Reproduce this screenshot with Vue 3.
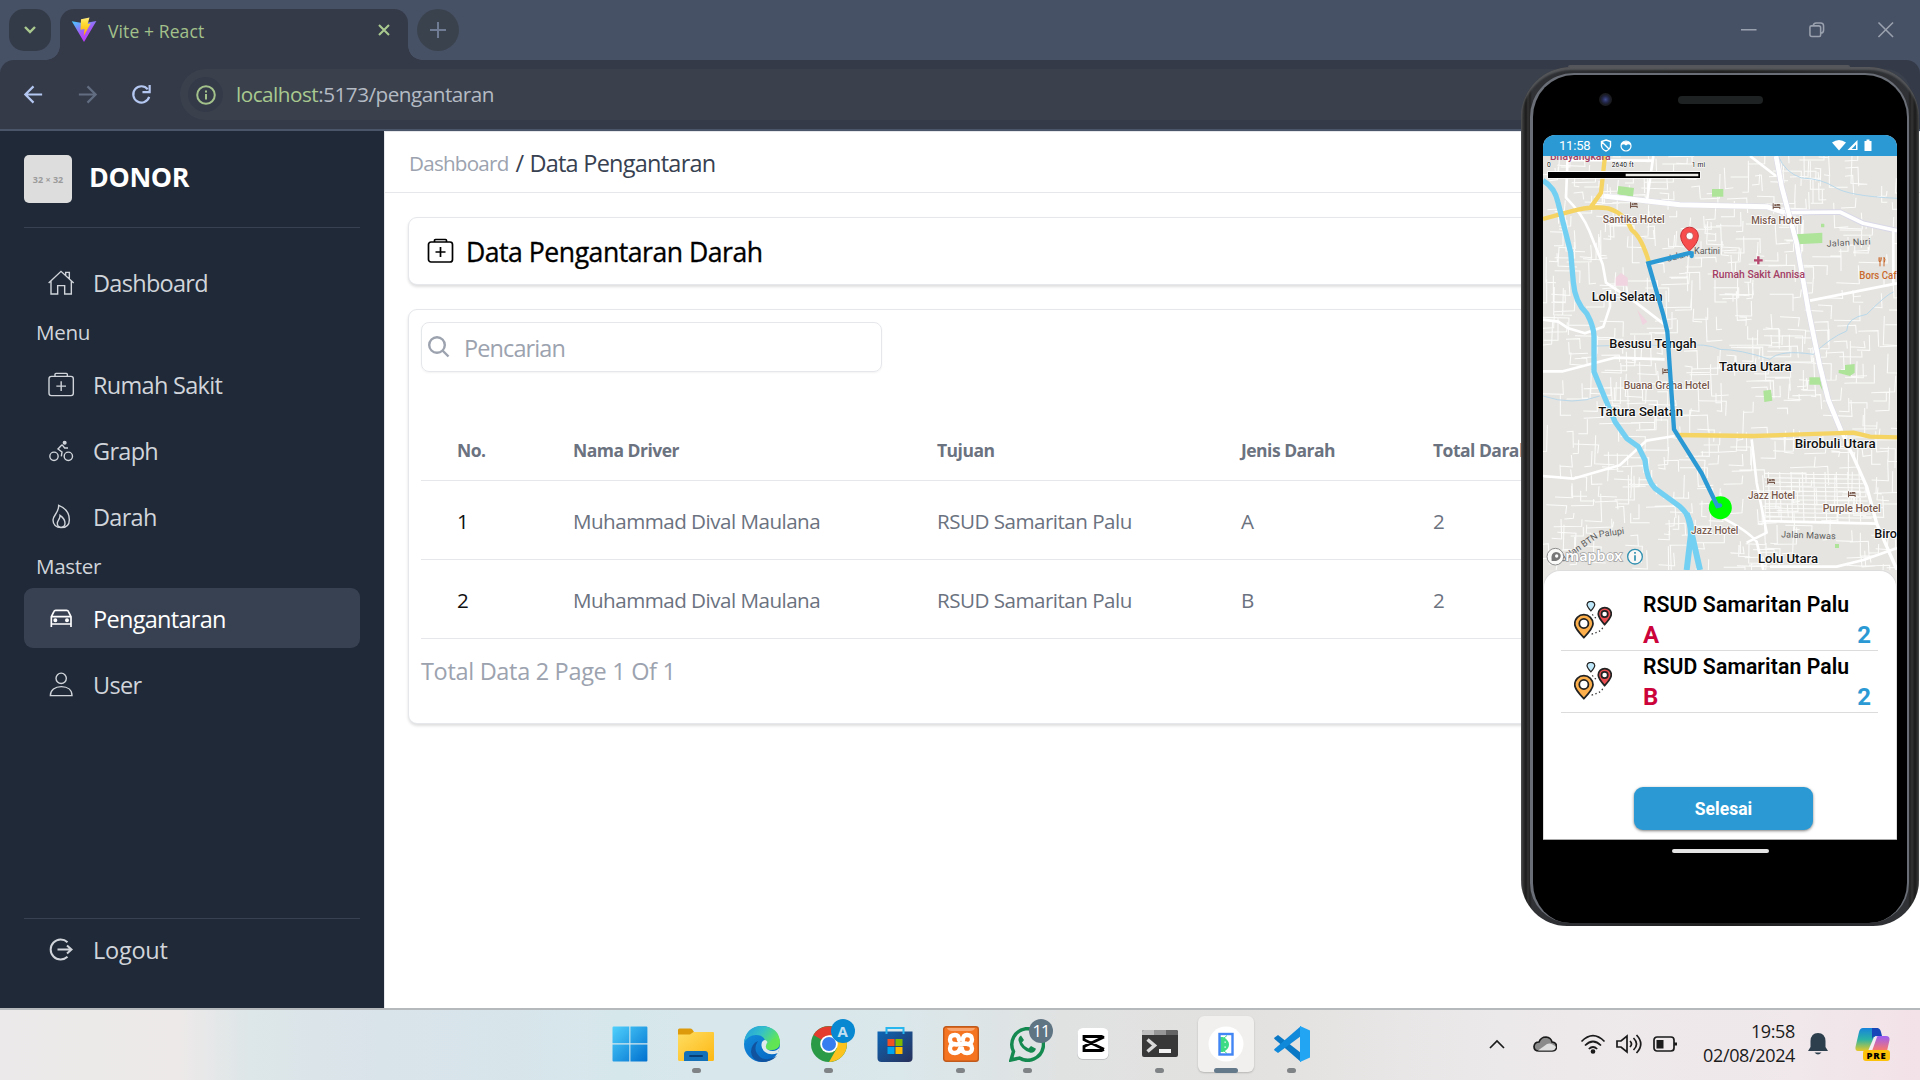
<script setup>
const menu = [
  { label: 'Dashboard', icon: 'house' },
  { heading: 'Menu' },
  { label: 'Rumah Sakit', icon: 'medical' },
  { label: 'Graph', icon: 'bike' },
  { label: 'Darah', icon: 'flame' },
  { heading: 'Master' },
  { label: 'Pengantaran', icon: 'car', active: true },
  { label: 'User', icon: 'user' },
]
const columns = ['No.', 'Nama Driver', 'Tujuan', 'Jenis Darah', 'Total Darah']
const rows = [
  ['1', 'Muhammad Dival Maulana', 'RSUD Samaritan Palu', 'A', '2'],
  ['2', 'Muhammad Dival Maulana', 'RSUD Samaritan Palu', 'B', '2'],
]
const deliveries = [
  { place: 'RSUD Samaritan Palu', blood: 'A', total: 2 },
  { place: 'RSUD Samaritan Palu', blood: 'B', total: 2 },
]

// Minor street grid: deterministic short blocks, slightly skewed.
let seed = 41
const rnd = () => (seed = (seed * 16807) % 2147483647) / 2147483647
let streets = ''
for (let i = 0; i < 560; i++) {
  const x = 60 + rnd() * 1070
  const y = 285 + rnd() * 1240
  const a = 18 + rnd() * 70
  const b = 14 + rnd() * 46
  const k = (rnd() - 0.5) * 7
  const s = rnd() > 0.5 ? 1 : -1
  streets += rnd() > 0.45
    ? `M${x.toFixed(0)} ${y.toFixed(0)}l${a.toFixed(0)} ${k.toFixed(0)}l${(-k).toFixed(0)} ${(s * b).toFixed(0)}`
    : `M${x.toFixed(0)} ${y.toFixed(0)}l${k.toFixed(0)} ${a.toFixed(0)}l${(s * b).toFixed(0)} ${(-k).toFixed(0)}`
}
for (let i = 0; i < 12; i++) streets += `M735 ${1240 + i * 13}L${1025 + i * 3} ${1245 + i * 13}`
for (let i = 0; i < 9; i++) streets += `M${745 + i * 34} 1236L${750 + i * 34} 1385`

const areas = [
  ['Lolu Selatan', 215, 723, 213], ['Besusu Tengah', 268, 864, 262], ['Tatura Utara', 597, 932, 218],
  ['Tatura Selatan', 235, 1069, 254], ['Birobuli Utara', 824, 1163, 243], ['Lolu Utara', 714, 1508, 180], ['Biro', 1063, 1434, 68],
]
const hotels = [
  ['Santika Hotel', 248, 490, 186, 330, 427], ['Misfa Hotel', 694, 493, 152, 758, 430],
  ['Buana Graha Hotel', 311, 987, 258, 427, 925], ['Jazz Hotel', 684, 1317, 141, 742, 1255],
  ['Purple Hotel', 908, 1356, 174, 984, 1294], ['Jazz Hotel', 513, 1423, 142, 0, 0],
]
</script>

<template>
  <div class="desktop">
    <header class="tabs">
      <button class="tab-list"><svg width="14" height="10" viewBox="0 0 14 10"><path d="M2 2l5 5 5-5" /></svg></button>
      <div class="tab">
        <svg class="vite" width="26" height="26" viewBox="0 0 26 26">
          <defs>
            <linearGradient id="va" x1="0" y1="0" x2=".6" y2="1"><stop offset="0" stop-color="#41d1ff" /><stop offset=".6" stop-color="#a855f7" /><stop offset="1" stop-color="#bd34fe" /></linearGradient>
            <linearGradient id="vb" x1="0" y1="0" x2="0" y2="1"><stop offset="0" stop-color="#ffea83" /><stop offset=".3" stop-color="#ffdd35" /><stop offset="1" stop-color="#ffa800" /></linearGradient>
          </defs>
          <path d="M.8 4.2L13 25 25.4 4 13 6.2z" fill="url(#va)" /><path d="M10 2.2l8.5-1.6-1.8 6.5 3-.5-7 12.5.8-7.2-4 .8z" fill="url(#vb)" />
        </svg>
        <span class="tab-title">Vite + React</span>
        <svg class="tab-x" width="12" height="12" viewBox="0 0 12 12"><path d="M1 1l10 10M11 1L1 11" /></svg>
      </div>
      <button class="new-tab"><svg width="16" height="16" viewBox="0 0 16 16"><path d="M8 0v16M0 8h16" /></svg></button>
      <div class="win-controls">
        <svg viewBox="0 0 18 18"><path d="M1 9h16" /></svg>
        <svg viewBox="0 0 18 18"><path d="M2 6.5Q2 5 3.500 5H11q2 0 2 2v7.500q0 1.500-1.500 1.500H4q-2 0-2-2zM5.500 5q0-3 3-3H13q3 0 3 3v4.500q0 3-3 3" /></svg>
        <svg viewBox="0 0 18 18"><path d="M1.500 1.500l15 15M16.500 1.500l-15 15" /></svg>
      </div>
    </header>

    <div class="toolbar">
      <div class="nav">
        <svg viewBox="0 0 24 24"><path d="M21 12H4M12 3.500L3.500 12l8.500 8.500" /></svg>
        <svg class="dim" viewBox="0 0 24 24"><path d="M3 12h17M12 3.500l8.500 8.500-8.500 8.500" /></svg>
        <svg viewBox="0 0 24 24"><path d="M20 14.500A8.500 8.500 0 1 1 18.500 6.500" /><path d="M20.500 2v7.500H13" /></svg>
      </div>
      <div class="url">
        <span class="info"><svg width="20" height="20" viewBox="0 0 20 20"><circle cx="10" cy="10" r="8.800" /><path d="M10 9v5.500M10 5.400v2" /></svg></span>
        <span class="address"><b>localhost</b>:5173/pengantaran</span>
      </div>
    </div>

    <div class="page">
      <aside class="sidebar">
        <div class="brand"><span class="logo">32 × 32</span><strong>DONOR</strong></div>
        <nav class="menu">
          <template v-for="m in menu" :key="m.heading || m.label">
            <h3 v-if="m.heading">{{ m.heading }}</h3>
            <a v-else :class="{ active: m.active }">
              <svg v-if="m.icon === 'house'" viewBox="142 84 84 84"><path d="M147 129L184 94l38 35M154 124v38h20v-25h21v25h20v-38M198 106v-9h11v20" /></svg>
              <svg v-else-if="m.icon === 'medical'" viewBox="142 390 84 84"><rect x="148" y="409" width="73" height="58" rx="7" /><path d="M166 408v-5q0-3 3-3h31q3 0 3 3v5M184.500 424v29M170 438.500h29" /></svg>
              <svg v-else-if="m.icon === 'bike'" viewBox="142 588 84 84"><circle cx="163" cy="649" r="12.500" /><circle cx="206" cy="649" r="12.500" /><circle cx="195" cy="608" r="4" fill="currentColor" /><path d="M187 614l-12 13 12 9-2 13M187 614l8 10h10" /></svg>
              <svg v-else-if="m.icon === 'flame'" viewBox="142 786 84 84"><path d="M177 796c23 9 32 25 32 43 0 16-10 24-25 24s-24-10-24-23c0-14 18-22 17-44z" /><path d="M181 826c9 6 15 15 15 24 0 8-5 12-12 12s-11-4-11-12c0-9 9-13 8-24z" /></svg>
              <svg v-else-if="m.icon === 'car'" viewBox="142 1092 84 84" class="bold"><path d="M155 1161v-31l8-16q1-3 5-3h33q4 0 5 3l8 16v31M155 1130h59M155 1152h59" /><circle cx="167" cy="1141" r="3.500" fill="currentColor" /><circle cx="202" cy="1141" r="3.500" fill="currentColor" /></svg>
              <svg v-else viewBox="142 1290 84 84"><circle cx="184.500" cy="1315" r="15.500" /><path d="M152 1367c0-17 14-27 33-27s32 10 32 27z" /></svg>
              {{ m.label }}
            </a>
          </template>
        </nav>
        <div class="logout menu">
          <a><svg viewBox="0 0 28 28" class="out"><path d="M20.500 7.200A10 10 0 1 0 20.500 21.800M10.500 14.500h14M20 10.500l4.500 4-4.500 4" /></svg>Logout</a>
        </div>
      </aside>

      <main class="main">
        <div class="crumbs"><span>Dashboard</span><i>/</i><b>Data Pengantaran</b></div>
        <div class="content">
          <section class="card heading">
            <svg width="28" height="28" viewBox="0 0 28 28"><rect x="1.500" y="5" width="24" height="20" rx="2.500" /><path d="M7.500 5V3.500q0-1 1-1h10q1 0 1 1V5M13.500 10v10M8.500 15h10" /></svg>
            <h1>Data Pengantaran Darah</h1>
          </section>
          <section class="card list">
            <label class="search">
              <svg width="22" height="22" viewBox="0 0 22 22"><circle cx="9" cy="9" r="7.800" /><path d="M14.500 14.500L20.500 20.500" /></svg>
              <span>Pencarian</span>
            </label>
            <div class="table">
              <div class="tr th"><span v-for="c in columns" :key="c">{{ c }}</span></div>
              <div v-for="r in rows" :key="r[0]" class="tr"><span v-for="(c, i) in r" :key="i">{{ c }}</span></div>
            </div>
            <p class="total">Total Data 2 Page 1 Of 1</p>
          </section>
        </div>
      </main>
    </div>

    <footer class="taskbar">
      <div class="apps">
        <span class="app"><svg viewBox="0 0 36 36"><defs><linearGradient id="w" x1="0" y1="0" x2="1" y2="1"><stop offset="0" stop-color="#4fd0fc" /><stop offset="1" stop-color="#0070cf" /></linearGradient></defs><path d="M.5 1.500q0-1 1-1h15.800v16.800H.5zM18.400.5h16q1 0 1 1v15.800h-17zM.5 18.400h16.800v17H1.500q-1 0-1-1zM18.400 18.400h17v16q0 1-1 1h-16z" fill="url(#w)" /></svg></span>
        <span class="app run"><svg viewBox="0 0 36 36"><defs><linearGradient id="fo" x1="0" y1="0" x2="1" y2="1"><stop offset="0" stop-color="#ffdd62" /><stop offset="1" stop-color="#fdb813" /></linearGradient></defs><path d="M0 4q0-1.500 1.500-1.500H12q1.500 0 2.500 1.300L16 6v5H0z" fill="#dd9a0b" /><path d="M0 8.500h12L15.500 6H35q1 0 1 1v26.500q0 1.500-1.500 1.500h-33Q0 35 0 33.500z" fill="url(#fo)" /><path d="M6 35v-7q0-3 3-3h18q3 0 3 3v7z" fill="#1271b9" /><rect x="11" y="29" width="14" height="2" rx="1" fill="#073f75" /></svg></span>
        <span class="app"><svg viewBox="0 0 36 36"><defs><linearGradient id="e1" x1="0" y1="0" x2="1" y2=".5"><stop offset="0" stop-color="#2199e4" /><stop offset=".5" stop-color="#35c1c7" /><stop offset="1" stop-color="#66eb4c" /></linearGradient><linearGradient id="e2" x1="0" y1="0" x2=".7" y2="1"><stop offset="0" stop-color="#1593df" /><stop offset="1" stop-color="#0768c4" /></linearGradient></defs><circle cx="18" cy="18" r="18" fill="url(#e2)" /><path d="M0 17Q2 0 18 0q17 1 18 16 0 8-9 8-6 0-5-4Q22 9 12 9 4 9 0 17z" fill="url(#e1)" /><path d="M14 15q-6 9 2 16 7 5 17-1-6 6-15 6-10-1-11-10 0-8 7-11z" fill="#11539f" /><path d="M18 16q3-4 5.500 0-2 3-1.500 5 1 4 7 4 4 0 7-4l-2 6q-8 3-13-1-5-4-3-10z" fill="#dfe9ec" /><path d="M22 20q-1 4 5 4 8 0 9-8l-6-4z" fill="#60e455" opacity=".8" /></svg></span>
        <span class="app run"><svg viewBox="0 0 36 36"><circle cx="18" cy="18" r="18" fill="#2b9a47" /><path d="M18 18L2.500 9A18 18 0 0 1 33.500 9z" fill="#e33b2e" /><path d="M18 9h15.500A18 18 0 0 1 18 36l8-14z" fill="#fcc31e" /><circle cx="18" cy="18" r="8.800" fill="#fff" /><circle cx="18" cy="18" r="7" fill="#367df0" /></svg><em class="badge blue">A</em></span>
        <span class="app"><svg viewBox="0 0 36 36"><defs><linearGradient id="st" x1="0" y1="0" x2="1" y2="1"><stop offset="0" stop-color="#0d66b5" /><stop offset="1" stop-color="#28305a" /></linearGradient></defs><path d="M.5 5.500h35V32q0 4-4 4h-27q-4 0-4-4z" fill="url(#st)" /><path d="M9.500 8V2h17v6" fill="none" stroke="#27b6ed" stroke-width="2" /><path d="M10.500 13h7v7h-7z" fill="#f25022" /><path d="M18.500 13h7v7h-7z" fill="#7fba00" /><path d="M10.500 21h7v7h-7z" fill="#00a4ef" /><path d="M18.500 21h7v7h-7z" fill="#ffb900" /></svg></span>
        <span class="app run"><svg viewBox="0 0 36 36"><rect x=".7" y=".7" width="34.600" height="34.600" rx="2.500" fill="#f57421" stroke="#c05a1c" stroke-width="1.400" /><path d="M4 2h28q-1 3-5 3H9Q5 5 4 2z" fill="#f9a56f" /><g fill="none" stroke="#fff" stroke-width="4.300" stroke-linecap="round" stroke-linejoin="round"><path d="M16 14q0-5-4-5-5 0-5 4.500t5 4.500q-5 0-5 4.500T12 27q4 0 5-4.500M20 14q0-5 4-5 5 0 5 4.500T24 18q5 0 5 4.500T24 27t-5-4.500M13 18.500l10-1" /></g></svg></span>
        <span class="app run"><svg viewBox="0 0 36 36"><path d="M2 34l2.500-8.500A15.800 15.800 0 1 1 10.500 32z" fill="none" stroke="#158a50" stroke-width="3.500" /><path d="M12 9.500q-3 2-2.500 5 2 9 12 12.300 4 .5 5.500-4l-5-2.800-2.500 2.500q-4.500-2-6.500-6L15 14z" fill="#158a50" /></svg><em class="badge grey">11</em></span>
        <span class="app"><svg viewBox="0 0 36 36"><rect x="2" y="3" width="32" height="31" rx="6" fill="#bfc1c2" /><rect x="2.500" y="2" width="31" height="31" rx="5.500" fill="#fff" /><path d="M29 11.500l-2.500-1H9v3.200l20 9.500M9 23.500v-3L29 11M9 21.500v3h17.500l2.500-1" fill="none" stroke="#000" stroke-width="2.800" /></svg></span>
        <span class="app run"><svg viewBox="0 0 36 36"><rect y="4" width="36" height="27" rx="2" fill="#383838" /><path d="M0 9V6q0-2 2-2h10v5z" fill="#bebebe" /><path d="M12 4h12v5H12z" fill="#969696" /><path d="M24 4h10q2 0 2 2v3H24z" fill="#646464" /><path d="M5.500 13.500l7 6-7 6" fill="none" stroke="#dadada" stroke-width="3.500" /><rect x="17" y="23" width="12" height="4" fill="#f1f1f1" /></svg></span>
        <span class="app run focus"><svg viewBox="0 0 36 36"><circle cx="18" cy="18" r="17.500" fill="#fff" /><path d="M12 11h3q6 3 6 7.500T15 26h-3z" fill="#3ddc84" /><path d="M16 12l3-2.500M16 25l3 2.500" stroke="#3ddc84" /><path d="M16.500 15.500h1.300v1.300h-1.300zM16.500 20.500h1.300v1.300h-1.300z" fill="#fff" /><rect x="11.500" y="8" width="13" height="20.500" fill="none" stroke="#4285f4" stroke-width="2.400" /></svg></span>
        <span class="app run"><svg viewBox="0 0 36 36"><path d="M0 12l4-3 23 18v9L.5 13z" fill="#0a78c4" /><path d="M0 24l4 3L27 10V0L.5 23z" fill="#1089da" /><path d="M26 0l10 4.500v27L26 36z" fill="#22a5f2" /></svg></span>
      </div>
      <div class="tray">
        <svg class="t-up" width="16" height="10" viewBox="0 0 16 10"><path d="M1 9l7-7 7 7" /></svg>
        <svg class="t-cloud" width="24" height="16" viewBox="0 0 24 16"><path d="M6 15q-5 0-5-4.500Q1.500 6 6 6q2-5 7-5 5 .5 6 5 4.500.5 4.500 4.500T19 15z" fill="#8a8a8a" /><path d="M5 14.500l9-6.500q4-2 9 3-1 3.500-4 3.500z" fill="#dedede" stroke="none" /></svg>
        <svg class="t-wifi" width="26" height="20" viewBox="0 0 26 20"><path d="M1.500 7.500q11.500-11.500 23 0M5 11.500q8-8 16 0M8.800 15q4.200-4 8.400 0" /><circle cx="13" cy="17.500" r="1.500" fill="#1b1b1b" /></svg>
        <svg class="t-sound" width="26" height="20" viewBox="0 0 26 20"><path d="M1 7h4l6-5v16l-6-5H1zM14 7q3 3 0 6M17.500 4q6 6 0 12M20.500 1q8.500 9 0 18" /></svg>
        <svg class="t-batt" width="25" height="16" viewBox="0 0 25 16"><rect x="1" y="1" width="20" height="14" rx="3" /><path d="M22.500 6.500v3" stroke-width="3" /><path d="M3.500 4h7v8.500h-7z" fill="#1b1b1b" stroke="none" /></svg>
        <div class="clock"><span>19:58</span><span>02/08/2024</span></div>
        <svg class="t-bell" width="20" height="24" viewBox="0 0 20 24"><path d="M2.500 15V9Q3 1 10 1t7.500 8v6l2.500 4H0zM6.500 20.500h7q-3.500 4-7 0z" fill="#2d3f4d" stroke="none" /></svg>
        <span class="copilot">
          <svg width="36" height="34" viewBox="0 0 36 34"><defs><linearGradient id="c1" x1="0" y1="0" x2="0" y2="1"><stop offset="0" stop-color="#1683dc" /><stop offset=".5" stop-color="#2bb3a5" /><stop offset="1" stop-color="#e6c928" /></linearGradient><linearGradient id="c2" x1="0" y1="0" x2="0" y2="1"><stop offset="0" stop-color="#9b5cf5" /><stop offset="1" stop-color="#ff7a62" /></linearGradient></defs><path d="M8 1h15l-7 20q-1 3-4 3H3q-3 0-2.500-4L4 5q1-4 4-4z" fill="url(#c1)" /><path d="M17 1h5q3 0 4 4l1 4h-6q-3 0-4 3z" fill="#1646b8" /><path d="M24 9h7q4 0 3.500 4L32 24H10q5 0 7-5l3-7q1-3 4-3z" fill="url(#c2)" /><path d="M19 10h3l-5 14h-4z" fill="#f3ecf2" /></svg>
          <em>PRE</em>
        </span>
      </div>
    </footer>

    <div class="antenna"></div>
    <div class="phone">
      <div class="bezel">
        <div class="top"><span class="camera"></span><span class="speaker"></span></div>
        <div class="screen">
          <div class="status">
            <span>11:58</span>
            <svg width="12" height="13" viewBox="0 0 12 13"><path d="M6 1l4.500 1.500V7Q10 10.500 6 12 2 10.500 1.500 7V2.500zM2 3l7 7" fill="none" stroke="#fff" stroke-width="1.400" /></svg>
            <svg class="s2" width="12" height="12" viewBox="0 0 12 12"><circle cx="6" cy="6" r="5" fill="none" stroke="#fff" stroke-width="1.200" /><path d="M1 5V3.500Q6-1 11 3.500V5l-3-.8L6 5.500 4 4.200z" fill="#fff" /></svg>
            <svg class="s3" width="41" height="13" viewBox="0 0 41 13"><path d="M0 3.500Q7-1.500 14 3.500L7 11.500z" fill="#fff" /><path d="M25.500 1v10h-10z" fill="#fff" /><path d="M24 5.500V10h-4.300z" fill="#2b9ad4" /><path d="M32.500 2h2V.5h3V2h2v10h-7z" fill="#fff" /></svg>
          </div>
          <svg class="map" viewBox="69 288 1062 1242" preserveAspectRatio="none">
            <rect x="69" y="288" width="1062" height="1242" fill="#e5e4e0" />
            <path :d="streets" fill="none" stroke="#fbfbfa" stroke-width="3.200" />
            <g fill="#aee39a"><path d="M295 378l47 6-3 26-47-7zM576 387h34v23h-34zM827 523l80-5v31l-75 4zM903 491h10v11h-10zM730 992l23-3 4 33-24 4zM868 952h32l8 42-9-20h-31zM975 915l29-3v26l-14 10-34-9v-9h19zM945 1452h12v12h-12z" /></g>
            <g fill="#f0d4df"><path d="M303 639l20 14v24h-36v-24zM352 750l30 35-14 10z" /></g>
            <g fill="none" stroke="#b9d8ea" stroke-width="3"><path d="M775 288q20 50 70 66 60 2 100 28t186 33M69 1008q90 30 170 0M230 858q140-5 250 0 80-10 120 10 60 0 150 30 30-30 130-15 50-50 100-70 0-40 60-50 60-60 80-67" /></g>
            <path d="M250 408l230 26 260 6 55 18 165-2 70 34 101 22" fill="none" stroke="#d9d8e8" stroke-linejoin="round" stroke-width="17" />
            <g fill="none" stroke="#fff" stroke-linejoin="round">
              <path d="M250 408l230 26 260 6 55 18" stroke-width="15" /><path d="M795 458l165-2 70 34 101 22" stroke-width="11" />
              <path d="M768 288l17 92 45 170 35 200 35 170 25 100 38 92" stroke="#d9d8e8" stroke-width="17" /><path d="M768 288l17 92 45 170 35 200 35 170 25 100 38 92" stroke-width="14" /><path d="M963 1112l37 78 40 90 30 110 61 140" stroke-width="10" />
              <path d="M143 288l-5 125q50 50 70 100l40 100 10 55 90 60 85 65M270 690v50l-20 60-55 20-50-15-30-20-46-6M400 288l-20 140M140 300l260 2M870 722l261-52M69 934h60l155-41 150 5M69 1248l90 8 140-40 80-74 85-14M695 1138l15 130 30 150-60 30M600 1370q80 40 110 75l20 85M735 1383l335 8M750 1520h200l80-20 101-36M690 288l78 60M1120 512v160" stroke-width="8" />
            </g>
            <g fill="none" stroke="#f5d463" stroke-width="13" stroke-linejoin="round">
              <path d="M69 477l81-22q60-18 115-10 50 15 70 65 30 20 53 100M255 288l-12 110-31 44M470 1125l230 3 300-10 50 12 81 2" />
            </g>
            <g fill="none" stroke="#74d0f2" stroke-linejoin="round">
              <path d="M69 362q35 20 45 65l38 150 8 90q5 60 40 93 22 40 22 70v105l33 80 30 70 35 50 35 25 20 40q5 60 30 85l75 55q35 30 35 75" stroke-width="16" /><path d="M500 1360q15 40 12 70l-12 100M515 1420l25 110" stroke-width="18" />
            </g>
            <g class="poi" fill="#78594c">
              <template v-for="h in hotels" :key="h[0] + h[1]">
                <text :x="h[1]" :y="h[2]" :textLength="h[3]" lengthAdjust="spacingAndGlyphs" stroke="#fff" stroke-width="5" paint-order="stroke">{{ h[0] }}</text>
                <path v-if="h[4]" :transform="`translate(${h[4]} ${h[5]})`" d="M0 0h3v10h20v7h-3v-3H3v4H0zM5 3h6v5H5zM12 2h8q3 1 3 5H12z" />
              </template>
              <text x="577" y="655" textLength="278" lengthAdjust="spacingAndGlyphs" fill="#a33d65">Rumah Sakit Annisa</text>
              <path d="M715 589v24M702 601h26" stroke="#b6476f" stroke-width="7" />
              <text x="1018" y="658" textLength="112" lengthAdjust="spacingAndGlyphs" fill="#c96a2e" class="heavy">Bors Caf</text>
              <path d="M1077 592v12q7 4 7-12M1080 592v27M1092 619v-27q5 5 1 15" fill="none" stroke="#c96a2e" stroke-width="3" />
              <text x="90" y="299" textLength="182" lengthAdjust="spacingAndGlyphs" fill="#a33d65">Bhayangkara</text>
            </g>
            <g class="road" fill="#5c5c5c">
              <text x="920" y="560" textLength="132" transform="rotate(-3 920 560)">Jalan Nuri</text><text x="783" y="1432" textLength="164" transform="rotate(2 783 1432)">Jalan Mawas</text>
              <text x="443" y="605" textLength="65" transform="rotate(-14 443 605)">Jalan</text><text x="522" y="581" textLength="78">Kartini</text>
              <text x="130" y="1506" textLength="128" transform="rotate(-35 130 1506)">Jalan BTN</text><text x="238" y="1432" textLength="76" transform="rotate(-8 238 1432)">Palupi</text>
            </g>
            <g class="area"><text v-for="a in areas" :key="a[0]" :x="a[1]" :y="a[2]" :textLength="a[3]" lengthAdjust="spacingAndGlyphs">{{ a[0] }}</text></g>
            <circle cx="601" cy="1343" r="34.500" fill="#0f0" />
            <path d="M515 588v-8l-6-1-124 31 45 155 12 50 20 293 83 132 47 98 8-2" fill="none" stroke="#2b9ad4" stroke-width="13" stroke-linecap="round" />
            <path d="M508 573q-26-24-26-45a26.500 26.500 0 0 1 53 0q0 21-27 45z" fill="#f84d4d" stroke="#c62f35" stroke-width="3" /><circle cx="509" cy="528" r="11" fill="#fff" stroke="#a33" stroke-width="2" />
            <path d="M82 333h460v23H82z" fill="#fff" /><path d="M84 336h456v18H84z" fill="#000" /><path d="M317 341h218v8H317z" fill="#ecebe7" />
            <g class="scale"><text x="81" y="320">0</text><text x="275" y="320" textLength="66">2640 ft</text><text x="515" y="320" textLength="40">1 mi</text></g>
            <circle cx="106" cy="1490" r="25" fill="#fff" fill-opacity=".8" stroke="#8c8c8c" stroke-width="3" /><path d="M95 1503q-4-26 13-27 16 2 14 14-4 15-27 13z" fill="#777" /><circle cx="110" cy="1488" r="5" fill="#fff" />
            <text class="mapbox" x="136" y="1502" textLength="171" lengthAdjust="spacingAndGlyphs">mapbox</text>
            <circle cx="345" cy="1490" r="22" fill="#fff" fill-opacity=".75" stroke="#2f8fb0" stroke-width="4" /><path d="M345 1486v16M345 1476v5" stroke="#2f8fb0" stroke-width="5" />
          </svg>
          <div class="sheet">
            <div v-for="d in deliveries" :key="d.blood" class="stop">
              <svg width="38" height="38" viewBox="0 0 108 108"><g stroke="#222" stroke-width="5"><path d="M28 104q-26-26-26-39a26 26 0 0 1 52 0q0 13-26 39z" fill="#fdb04b" /><circle cx="28" cy="64" r="13" fill="#fff" /><path d="M87 67q-18-20-18-30a18 18 0 0 1 37 0q0 10-19 30z" fill="#ea4e50" /><circle cx="87" cy="37" r="9" fill="#fff" /><path d="M48 28Q37 16 37 10q1-9 11-9t11 9q0 6-11 18z" fill="#bfe9fb" stroke-width="3.500" /></g><path d="M50 94q30-8 32-20M52 38l6 8 10 5" fill="none" stroke="#333" stroke-width="3.500" stroke-dasharray="4 7" /></svg>
              <div class="info-col"><strong>{{ d.place }}</strong><div class="pair"><b>{{ d.blood }}</b><i>{{ d.total }}</i></div></div>
            </div>
            <button class="done">Selesai</button>
          </div>
        </div>
        <span class="home"></span>
      </div>
    </div>
  </div>
</template>

<style>
html, body { margin: 0; overflow: hidden; }
</style>

<style scoped>
* { box-sizing: border-box; }
.desktop { position: relative; width: 1920px; height: 1080px; overflow: hidden; display: flex; flex-direction: column; background: #475165; font-family: "Open Sans", "Noto Sans", sans-serif; letter-spacing: -0.02em; }
button { border: 0; padding: 0; font: inherit; display: flex; align-items: center; justify-content: center; }
svg { display: block; flex: none; }
em, i { font-style: normal; }

.tabs { height: 60px; display: flex; padding: 9px 0 0 9px; flex: none; }
.tab-list { width: 42px; height: 42px; border-radius: 15px; background: #343b48; }
.tab-list svg { fill: none; stroke: #a9c98f; stroke-width: 2.4; }
.tab { position: relative; width: 348px; height: 51px; margin-left: 9px; border-radius: 14px 14px 0 0; background: #343a48; display: flex; align-items: flex-start; padding: 8px 18px 0 11px; }
.tab::before, .tab::after { content: ""; position: absolute; bottom: 0; width: 14px; height: 14px; }
.tab::before { left: -14px; background: radial-gradient(circle at 0 0, transparent 13.5px, #343a48 14px); }
.tab::after { right: -14px; background: radial-gradient(circle at 100% 0, transparent 13.5px, #343a48 14px); }
.tab-title { flex: 1; margin-left: 11px; font-size: 17.500px; line-height: 29px; color: #a3c18b; letter-spacing: 0.006em; }
.tab-x { fill: none; stroke: #a9c98f; stroke-width: 2.1; margin-top: 7px; }
.new-tab { width: 42px; height: 42px; margin-left: 9px; border-radius: 50%; background: #3a424e; }
.new-tab svg { stroke: #6f7c94; stroke-width: 2; }
.win-controls { margin-left: auto; display: flex; gap: 51px; padding: 12px 26px 0 0; }
.win-controls svg { width: 17.500px; height: 17.500px; fill: none; stroke: #9aa1ae; stroke-width: 1.6; }

.toolbar { height: 71px; flex: none; background: #343a48; border-bottom: 2px solid #4b5569; border-radius: 14px 14px 0 0; display: flex; padding: 9px 9px 9px 22px; }
.nav { display: flex; gap: 31px; padding-top: 14px; width: 158px; }
.nav svg { width: 23px; height: 23px; fill: none; stroke: #b4c7f1; stroke-width: 2.3; }
.nav .dim { stroke: #626d82; }
.url { flex: 1; height: 51px; border-radius: 26px; background: #3a414d; display: flex; align-items: center; padding-left: 8px; }
.info { width: 35px; height: 35px; border-radius: 50%; background: #343a48; display: flex; align-items: center; justify-content: center; }
.info svg { fill: none; stroke: #a3c18b; stroke-width: 2; }
.address { margin: -2px 0 0 13px; font-size: 20.700px; line-height: 28px; color: #b5bbc4; letter-spacing: -0.024em; }
.address b { font-weight: 400; color: #a9c98f; }

.page { height: 877px; flex: none; display: flex; background: #fff; }
.sidebar { width: 384px; background: #1f2937; color: #d1d5db; padding: 24px 24px 29px; display: flex; flex-direction: column; }
.brand { height: 73px; border-bottom: 1px solid #374151; display: flex; }
.logo { width: 48px; height: 48px; border-radius: 5px; background: #ddd; color: #9b9b9b; font-size: 9px; font-weight: 700; line-height: 49px; text-align: center; letter-spacing: 0; white-space: nowrap; }
.brand strong { margin-left: 17px; color: #fff; font-size: 26.800px; line-height: 44px; letter-spacing: -0.014em; }
.menu { flex: 1; padding-top: 24px; }
.menu a { display: flex; align-items: center; height: 60px; margin-bottom: 6px; padding-left: 23px; border-radius: 9px; font-size: 23.500px; line-height: 36px; padding-top: 2px; letter-spacing: -0.03em; }
.menu a svg { width: 28px; height: 28px; margin: -2px 18px 0 0; fill: none; stroke: currentColor; stroke-width: 4.2; }
.menu a svg.bold { stroke-width: 5; }
.menu a svg.out { stroke-width: 2; }
.menu a.active { background: #384152; color: #fff; }
.menu h3 { margin: -6px 0 0; padding-left: 12px; height: 42px; font-size: 20.600px; font-weight: 400; line-height: 40px; }
.logout { flex: none; height: 61px; padding-top: 0; margin-bottom: 0; border-top: 1px solid #374151; }
.logout a { letter-spacing: -0.01em; }

.main { flex: 1; border-top: 1px solid #e5e7eb; border-left: 1px solid #e5e7eb; }
.crumbs { height: 61px; border-bottom: 1px solid #e5e7eb; display: flex; align-items: center; padding: 2px 0 0 24px; line-height: 32px; font-size: 23.500px; color: #374151; letter-spacing: -0.032em; }
.crumbs span { font-size: 20.600px; color: #9ca3af; }
.crumbs i { margin: 0 6px 0 7px; }
.crumbs b { font-weight: 400; }
.content { padding: 24px 24px 0 23px; display: flex; flex-direction: column; gap: 24px; }
.card { border: 1px solid #e5e7eb; border-radius: 9px; background: #fff; box-shadow: 0 2px 3px rgba(0, 0, 0, .13); }
.heading { height: 68px; display: flex; align-items: center; padding-left: 18px; }
.heading svg { fill: none; stroke: #000; stroke-width: 1.700; margin-top: 0; }
.heading h1 { margin: 2px 0 0 11px; font-size: 26.600px; line-height: 36px; font-weight: 500; color: #000; letter-spacing: -0.018em; -webkit-text-stroke: .35px #000; }
.list { height: 415px; padding: 12px; }
.search { width: 461px; height: 50px; border: 1px solid #e5e7eb; border-radius: 8px; box-shadow: 0 1px 2px rgba(0, 0, 0, .05); display: flex; align-items: center; padding-left: 6px; color: #9ca3af; font-size: 23.500px; letter-spacing: -0.038em; }
.search svg { fill: none; stroke: #9ca3af; stroke-width: 2.400; }
.search span { margin: 2px 0 0 14px; line-height: 32px; }
.table { margin-top: 52px; color: #6b7280; font-size: 20.600px; letter-spacing: -0.025em; }
.tr { display: grid; grid-template-columns: 116px 364px 304px 192px 1fr; padding-left: 36px; height: 79px; border-bottom: 1px solid #e5e7eb; align-items: center; }
.tr span { line-height: 30px; padding-top: 2px; white-space: nowrap; }
.tr:not(.th) span:first-child { color: #111; font-weight: 500; }
.th { height: 57px; font-size: 17.500px; font-weight: 700; padding-bottom: 6px; }
.total { margin: 16px 0 0; font-size: 23.500px; line-height: 32px; color: #9ca3af; }

.taskbar { height: 72px; flex: none; border-top: 2px solid #b5b9bc; display: flex; padding-left: 597px; background: linear-gradient(90deg, #ebe9e9 0, #ede9e9 180px, #dde6e8 250px, #d9e3ea 380px, #d6e7ec 620px, #dae7eb 900px, #e0e2e2 1060px, #e2e1df 1240px, #ece9ea 1500px, #f0e8eb 1800px, #f3e2e8 1920px); }
.apps { display: flex; }
.app { position: relative; width: 66.200px; height: 70px; display: flex; justify-content: center; padding-top: 16px; }
.app svg { width: 36px; height: 36px; position: relative; }
.app.run::after { content: ""; position: absolute; bottom: 7px; left: 28.500px; width: 9px; height: 5px; border-radius: 3px; background: #7f8385; }
.app.focus::before { content: ""; position: absolute; left: 5px; top: 6px; width: 56px; height: 56px; border-radius: 6px; background: #f1f0ef; box-shadow: 0 1px 2px rgba(0, 0, 0, .2); }
.app.focus::after { left: 21px; width: 24px; background: #64798a; }
.badge { position: absolute; top: 9px; left: 35px; width: 24px; height: 24px; border-radius: 50%; text-align: center; color: #fff; font-size: 15px; line-height: 24px; }
.badge.blue { background: #0788d1; font-weight: 700; color: #c2e0f1; }
.badge.grey { background: #607584; font-size: 16.500px; letter-spacing: -0.05em; }
.tray { position: relative; margin-left: auto; width: 442px; display: flex; align-items: center; padding-bottom: 2px; }
.tray svg { fill: none; stroke: #1b1b1b; stroke-width: 1.700; }
.t-up { margin-left: 11px; }
.t-cloud { margin-left: 28px; }
.t-wifi { margin-left: 23px; }
.t-sound { margin-left: 10px; }
.t-batt { margin-left: 11px; }
.clock { margin-left: auto; display: flex; flex-direction: column; text-align: right; font-size: 18px; line-height: 24px; color: #1b1b1b; letter-spacing: -0.02em; margin-top: -2px; }
.t-bell { margin-left: 13px; }
.copilot { position: relative; margin: 0 29px 0 27px; }
.copilot svg { stroke: none; }
.copilot em { position: absolute; left: 8px; top: 23px; width: 27px; height: 11px; border-radius: 3px; background: #fbc209; color: #000; font-size: 9.500px; line-height: 11px; font-weight: 800; text-align: center; letter-spacing: .08em; }

.antenna { position: absolute; left: 1568px; top: 65px; width: 282px; height: 4px; background: #54565c; border-radius: 2px 2px 0 0; }
.phone { position: absolute; left: 1521px; top: 67px; width: 398px; height: 859px; border-radius: 50px 50px 46px 46px; background: linear-gradient(90deg, #4c4d4e 0, #2b2b2b 3px, #1b1b1b 5px, #333 7px, #222 9px, #303236 11px, #202020 50%, #303236 387px, #222 389px, #333 391px, #1b1b1b 394px, #3b3b3b 398px); padding: 6px 10px 3px 9px; box-shadow: inset 0 3px 2px #55575a; }
.bezel { height: 850px; border-radius: 44px 44px 40px 40px; background: #000; border: solid #6a6e76; border-width: 2px 2px 0 3px; border-bottom-color: #222; display: flex; flex-direction: column; align-items: center; }
.top { width: 354px; height: 60px; position: relative; flex: none; display: flex; align-items: flex-start; padding: 18px 0 0 56px; }
.camera { width: 13px; height: 13px; border-radius: 50%; background: radial-gradient(circle, #3f4a8c 0, #23284c 3px, #1b1d26 5px, #1a1a1a 7px); }
.speaker { width: 85px; height: 8px; margin: 3px 0 0 66px; border-radius: 4px; background: #1f2222; }
.screen { width: 354px; height: 705px; flex: none; overflow: hidden; border-radius: 12px 12px 0 0; background: #e8e7e4; font-family: Roboto, sans-serif; letter-spacing: 0; display: flex; flex-direction: column; border-bottom: 1px solid #aaa; }
.status { height: 21px; background: #2b9ad4; display: flex; align-items: center; padding: 0 24px 0 16px; color: #fff; font-size: 13px; flex: none; }
.status span { margin-right: 10px; letter-spacing: -0.2px; }
.s2 { margin-left: 8px; }
.s3 { margin-left: auto; }
.map { width: 354px; height: 414px; flex: none; }
.map text { font-family: Roboto, sans-serif; }
.poi text { font-size: 30px; font-weight: 500; }
.poi .heavy { font-size: 31px; }
.area text { font-size: 39px; font-weight: 500; fill: #111; stroke: #fff; stroke-width: 5px; paint-order: stroke; }
.road text { font-size: 27px; }
.scale text { font-size: 20px; fill: #111; stroke: #fff; stroke-width: 3px; paint-order: stroke; }
.map .mapbox { font-family: "Noto Sans", sans-serif; font-size: 42px; font-weight: 600; fill: #fff; stroke: #a0a0a0; stroke-width: 4px; paint-order: stroke; }
.sheet { flex: 1; display: flex; flex-direction: column; background: #fff; border: 1px solid #ddd; border-bottom: 0; border-radius: 17px 17px 0 0; padding: 18.500px 18px 0 17px; }
.stop { height: 61.500px; display: flex; border-bottom: 1px solid #dcdcdc; align-items: flex-start; }
.stop > svg { margin: 11px 0 0 13px; }
.info-col { flex: 1; margin-left: 31px; }
.info-col strong { display: block; margin-top: 2.500px; font-size: 21.200px; line-height: 26px; font-weight: 600; color: #000; white-space: nowrap; letter-spacing: 0.1px; }
.pair { display: flex; justify-content: space-between; padding: 3px 7px 0 0; font-size: 24px; line-height: 28px; }
.pair b { color: #cc033b; font-weight: 700; }
.pair i { color: #2b9ad4; font-weight: 700; }
.done { align-self: flex-start; width: 179px; height: 43px; margin: 74.500px 0 0 73px; border-radius: 9px; background: #2b9ad4; color: #fff; font-size: 17.500px; font-weight: 700; box-shadow: 0 1px 3px rgba(0, 0, 0, .5); }
.home { width: 97px; height: 4px; border-radius: 2px; background: #e4e4e4; margin-top: 9px; flex: none; }
</style>
